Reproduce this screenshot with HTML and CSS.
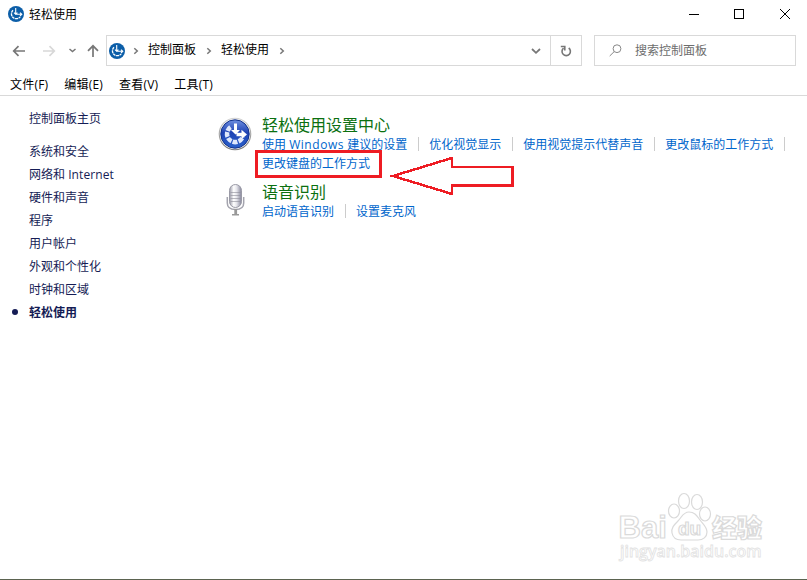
FILE: index.html
```html
<!DOCTYPE html>
<html lang="zh-CN">
<head>
<meta charset="utf-8">
<title>轻松使用</title>
<link rel="stylesheet" href="styles.css">
</head>
<body>
<svg width="0" height="0" class="defs">
  <defs>
    <linearGradient id="disc" x1="0" y1="0" x2="0" y2="1"><stop offset="0" stop-color="#6f8fe0"/><stop offset=".45" stop-color="#1f43b4"/><stop offset="1" stop-color="#2a62cc"/></linearGradient>
    <linearGradient id="rim" x1="0" y1="0" x2="0" y2="1"><stop offset="0" stop-color="#d4d4d4"/><stop offset="1" stop-color="#777"/></linearGradient>
    <linearGradient id="mic" x1="0" y1="0" x2="1" y2="0"><stop offset="0" stop-color="#9a9aa8"/><stop offset=".35" stop-color="#fff"/><stop offset=".6" stop-color="#e4e4ea"/><stop offset="1" stop-color="#85859a"/></linearGradient>
    <symbol id="ease" viewBox="0 0 16 16">
      <circle cx="8" cy="8" r="8" fill="#0c5ea8"/>
      <path d="M5 4.200A4.900 4.900 0 1 0 12.200 10.800" fill="none" stroke="#fff" stroke-width="1.300" stroke-dasharray="2.800 .6"/>
      <path d="M7.700 2v6.300H14M6 6.600l1.700 1.700 1.700-1.700M12 6.600l1.800 1.700-1.800 1.700" fill="none" stroke="#fff" stroke-width="1.100"/>
    </symbol>
    <symbol id="chev" viewBox="0 0 6 8"><path d="M1.300 1.200 4.300 4 1.300 6.800" fill="none" stroke="#777" stroke-width="1.500"/></symbol>
  </defs>
</svg>
<div class="window">
  <header class="titlebar">
    <svg class="app"><use href="#ease"/></svg>
    <span class="caption">轻松使用</span>
    <svg class="controls" width="102" height="12" viewBox="0 0 102 12" shape-rendering="crispEdges"><path d="M0 6.500h10" stroke="#000"/><rect x="45.500" y="1.500" width="9" height="9" fill="none" stroke="#000"/><path d="m91 1 10 10M101 1 91 11" stroke="#000" shape-rendering="auto"/></svg>
  </header>
  <nav class="navbar">
    <svg class="arrows" width="106" height="31" viewBox="0 0 106 31" fill="none" stroke-width="1.700">
      <path d="M25 16H14M18.500 11.200 13.700 16l4.800 4.800" stroke="#777"/>
      <path d="M43 16h11M49.500 11.200l4.800 4.800-4.800 4.800" stroke="#d8d8d8"/>
      <path d="m69.500 14 3 2.500 3-2.500" stroke="#777" stroke-width="1.500"/>
      <path d="M93 22V11M88 15.800l5-5 5 5" stroke="#777"/>
    </svg>
    <div class="address">
      <svg class="place"><use href="#ease"/></svg>
      <svg class="chev"><use href="#chev"/></svg><span>控制面板</span>
      <svg class="chev"><use href="#chev"/></svg><span>轻松使用</span>
      <svg class="chev"><use href="#chev"/></svg>
      <svg class="drop" width="10" height="8" viewBox="0 0 10 8"><path d="m1 2 4 3.800L9 2" fill="none" stroke="#777" stroke-width="1.800"/></svg>
      <div class="refresh"><svg width="12" height="12" viewBox="0 0 12 12" fill="none" stroke="#777" stroke-width="1.600"><path d="M8.700 3A4.200 4.200 0 1 1 3.600 3.100"/><path d="M.8 1.500H4.800V5.500"/></svg></div>
    </div>
    <div class="search"><svg width="13" height="13" viewBox="0 0 13 13" fill="none" stroke="#888"><circle cx="8" cy="4.700" r="3.900"/><path d="M5.200 7.600.7 12"/></svg><span>搜索控制面板</span></div>
  </nav>
  <div class="menubar"><span>文件(F)</span><span>编辑(E)</span><span>查看(V)</span><span>工具(T)</span></div>
  <div class="content">
    <aside class="sidebar">
      <div class="home">控制面板主页</div>
      <div>系统和安全</div><div>网络和 <span class="net">Internet</span></div><div>硬件和声音</div><div>程序</div><div>用户帐户</div><div>外观和个性化</div><div>时钟和区域</div><div class="current">轻松使用</div>
    </aside>
    <main class="main">
      <section class="group">
        <svg class="icon" width="34" height="34" viewBox="0 0 34 34">
          <circle cx="17" cy="17" r="16.300" fill="url(#rim)"/><circle cx="17" cy="17" r="15.200" fill="#eee"/><circle cx="17" cy="17" r="14.200" fill="url(#disc)" stroke="#12328c"/>
          <path d="M12.500 10.200A8.200 8.200 0 1 0 24.800 20" fill="none" stroke="#dfe8fb" stroke-width="4.500" stroke-dasharray="4.800 1.200"/>
          <path d="M16 6.500h3v6.500h3L17.500 17.500 13 13h3zM18.500 15.800h5v-3l5.500 4.700-5.500 4.700v-3h-5z" fill="#fff"/>
        </svg>
        <div class="detail">
          <h2>轻松使用设置中心</h2>
          <div class="links"><a>使用 <span class="win">Windows</span> 建议的设置</a><a>优化视觉显示</a><a>使用视觉提示代替声音</a><a>更改鼠标的工作方式</a></div>
          <div class="links"><a>更改键盘的工作方式</a></div>
        </div>
      </section>
      <section class="group speech">
        <svg class="icon" width="34" height="34" viewBox="0 0 34 34">
          <path d="M9.300 14v6q0 6.500 8.200 6.500t8.200-6.500v-6" fill="none" stroke="#a4a4ae" stroke-width="1.500"/>
          <path d="M16.300 26h2.800v5h-2.800zM14 31h7v1.500h-7z" fill="#999"/>
          <rect x="11.500" y="1.500" width="12" height="23" rx="6" fill="url(#mic)" stroke="#9a9aa6"/>
          <path d="M12.500 9.500h10M12.500 12.500h10M12.500 15.500h10M12.500 18.500h10" stroke="#8c8c98" stroke-opacity=".6"/>
        </svg>
        <div class="detail">
          <h2>语音识别</h2>
          <div class="links"><a>启动语音识别</a><a>设置麦克风</a></div>
        </div>
      </section>
    </main>
  </div>
  <svg class="marks" width="262" height="50" viewBox="0 0 262 50" fill="none" stroke="#ee1c23" stroke-width="3" shape-rendering="crispEdges"><rect x="2.500" y="3.500" width="124" height="25"/><path d="M139 28 198 10v9h60.500v18.500h-60.500v8.500z" stroke-width="2.500"/></svg>
  <svg class="watermark" width="170" height="80" viewBox="0 0 170 80" fill="#fff" stroke="#dadada" stroke-width="1.200">
    <text x="8.500" y="53" class="logo">Bai</text>
    <ellipse cx="64" cy="26" rx="5.500" ry="7"/><ellipse cx="74" cy="16" rx="5.500" ry="7.500"/><ellipse cx="87" cy="17" rx="5.500" ry="7.500"/><ellipse cx="95" cy="29" rx="5.500" ry="7"/>
    <path d="M79 27c-6 0-7 5-11 9s-7 7-6 12 5 7 9 7h17c5 0 9-3 9-8 0-5-4-8-7-12s-5-8-11-8z"/>
    <text x="68" y="50" class="du">du</text>
    <text x="102" y="52" class="jy">经验</text>
    <text x="10" y="72" class="url">jingyan.baidu.com</text>
  </svg>
</div>
</body>
</html>
```
FILE: styles.css
```css
* { box-sizing: border-box; }
body { margin: 0; background: #fff; font: 12px/20px "Open Sans", "Noto Sans CJK SC", sans-serif; color: #000; }
.defs { position: absolute; }
.window { position: relative; height: 580px; overflow: hidden; display: flex; flex-direction: column; border-bottom: 1px solid #5b6350; }
.titlebar { height: 35px; display: flex; align-items: flex-start; padding: 6px 16px 0 8px; }
.app, .place { width: 16px; height: 16px; flex: none; }
.caption { margin: -1px 0 0 5px; }
.controls { margin: 2px 0 0 auto; }
.navbar { height: 31px; display: flex; flex: none; }
.arrows { flex: none; }
.address { width: 476px; border: 1px solid #d9d9d9; display: flex; align-items: center; padding-left: 2px; }
.address span { margin-top: -2px; }
.chev { width: 6px; height: 8px; margin: 0 9px 0 8px; flex: none; }
.address span + .chev { margin-left: 10px; }
.address .chev, .place { position: static; }
.drop { margin-left: auto; margin-right: 9px; }
.refresh { width: 31px; height: 29px; border-left: 1px solid #d9d9d9; display: flex; align-items: center; justify-content: center; }
.search { width: 202px; margin-left: 12px; border: 1px solid #d9d9d9; display: flex; align-items: center; padding-left: 14px; gap: 13px; color: #6d6d6d; }
.menubar { height: 30px; flex: none; border-bottom: 1px solid #d9d9d9; padding: 9px 10px 0; display: flex; gap: 16px; letter-spacing: .2px; }
.content { display: flex; }
.sidebar { width: 220px; padding: 11px 0 0 29px; color: #151c55; line-height: 23px; }
.home { height: 33px; }
.net { letter-spacing: .1px; }
.win { letter-spacing: .57px; }
.current { font-weight: 700; position: relative; }
.current::before { content: ""; position: absolute; left: -17px; top: 8px; width: 6px; height: 6px; border-radius: 50%; background: #151c55; }
.group { display: flex; gap: 9px; padding-top: 19px; height: 86px; }
.group .icon { margin-top: 2px; margin-left: -2px; margin-right: 1px; flex: none; }
.group.speech { padding-top: 0; }
.group.speech .icon { margin-top: 1px; }
h2 { margin: 0; font-size: 16px; font-weight: 400; line-height: 20px; color: #0b7010; }
.links { display: flex; line-height: 19px; color: #0066cc; white-space: nowrap; }
.links a { position: relative; margin-right: 22px; }
.links a:not(:last-child)::after, .links a:nth-child(4)::after { content: ""; position: absolute; right: -12px; top: 2px; width: 1px; height: 14px; background: #ccc; }
.marks { position: absolute; left: 254px; top: 148px; }
.watermark { position: absolute; left: 610px; top: 485px; }
.logo { font: 700 31px "Liberation Sans", sans-serif; }
.du { font: 700 19px "Liberation Sans", sans-serif; }
.jy { font: 900 25px "Noto Sans CJK SC", sans-serif; }
.url { font: 600 16px "Open Sans", sans-serif; stroke: #e2e2e2; stroke-width: .8px; }
```
